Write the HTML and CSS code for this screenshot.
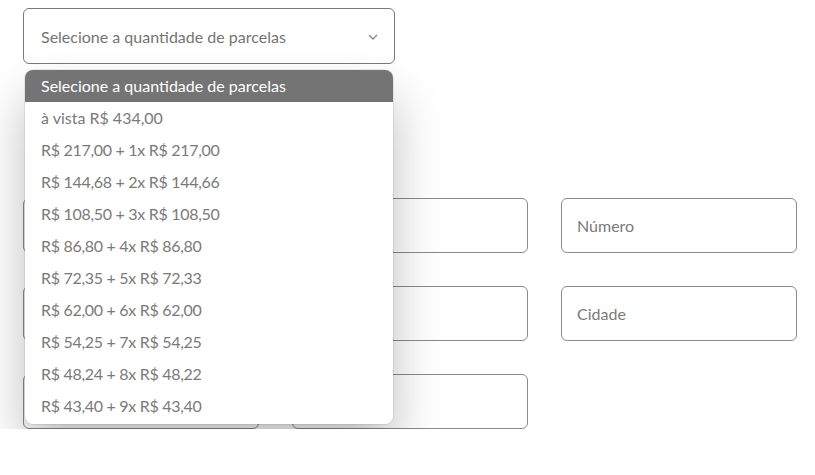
FILE: index.html
```html
<!DOCTYPE html>
<html lang="pt">
<head>
<meta charset="utf-8">
<link rel="stylesheet" href="styles.css">
</head>
<body>
<div class="page">
  <div class="select-wrap">
    <div class="select">
      <span>Selecione a quantidade de parcelas</span>
      <svg class="chev" width="10" height="6" viewBox="0 0 10 6"><path d="M1 1 L5 5 L9 1" fill="none" stroke="#888" stroke-width="1.3"/></svg>
    </div>
    <ul class="menu">
      <li class="active">Selecione a quantidade de parcelas</li>
      <li>à vista R$ 434,00</li>
      <li class="price">R$ 217,00 + 1x R$ 217,00</li>
      <li class="price">R$ 144,68 + 2x R$ 144,66</li>
      <li class="price">R$ 108,50 + 3x R$ 108,50</li>
      <li class="price">R$ 86,80 + 4x R$ 86,80</li>
      <li class="price">R$ 72,35 + 5x R$ 72,33</li>
      <li class="price">R$ 62,00 + 6x R$ 62,00</li>
      <li class="price">R$ 54,25 + 7x R$ 54,25</li>
      <li class="price">R$ 48,24 + 8x R$ 48,22</li>
      <li class="price">R$ 43,40 + 9x R$ 43,40</li>
    </ul>
  </div>
  <div class="form">
    <div class="field span2"></div>
    <div class="field">Número</div>
    <div class="field span2"></div>
    <div class="field">Cidade</div>
    <div class="field"></div>
    <div class="field"></div>
  </div>
</div>
</body>
</html>
```
FILE: styles.css
```css
* { box-sizing: border-box; }
body {
  margin: 0;
  background: #fff;
  font-family: Lato, "Open Sans", sans-serif;
  font-size: 16px;
  color: #7a7a7a;
}
.page {
  padding: 8px 18px 0 23px;
}
.select-wrap {
  position: relative;
  width: 372px;
}
.select {
  height: 56px;
  border: 1.5px solid #7a7a7a;
  border-radius: 6px;
  display: flex;
  align-items: center;
  justify-content: space-between;
  padding: 0 16px 0 17px;
  color: #747474;
}
.chev { margin-top: 2px; }
.menu {
  position: absolute;
  top: 62px;
  left: 2px;
  width: 368px;
  margin: 0;
  padding: 0 0 2px;
  list-style: none;
  background: #fff;
  border-radius: 8px;
  overflow: hidden;
  box-shadow: 0 0 0 1px rgba(0,0,0,0.07), 0 28px 50px rgba(0,0,0,0.26);
  z-index: 2;
}
.menu li {
  height: 32px;
  line-height: 31px;
  padding-left: 16px;
  color: #7a7a7a;
}
.menu li.price { letter-spacing: -0.3px; }
.menu li.active {
  background: #747474;
  color: #fff;
}
.form {
  margin-top: 134px;
  display: grid;
  grid-template-columns: 236px 236px 236px;
  column-gap: 33px;
  row-gap: 33px;
}
.field {
  height: 55px;
  border: 1px solid #8a8a8a;
  border-radius: 6px;
  display: flex;
  align-items: center;
  padding-left: 15px;
  color: #7a7a7a;
}
.span2 { grid-column: span 2; }
```
